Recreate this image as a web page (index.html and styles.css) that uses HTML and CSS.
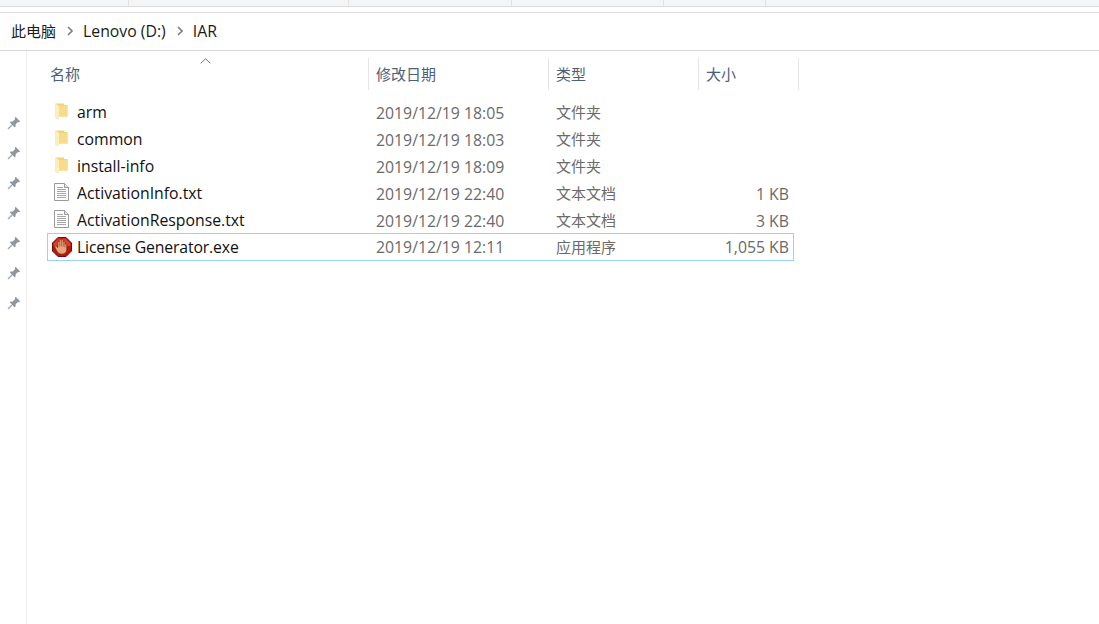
FILE: index.html
```html
<!DOCTYPE html>
<html lang="zh-CN">
<head>
  <meta charset="UTF-8" />
  <title>IAR</title>
  <link rel="stylesheet" href="styles.css">
</head>
<body>

  <svg class="defs" width="0" height="0">
    <defs>
      <symbol id="pin" viewBox="0 0 14 14">
        <path d="M8.6 0.8 13.2 5.4 11.8 6.2 11 5.9 8.6 8.3 8.6 10.6 7.5 11.2 2.9 6.6 3.6 5.5 5.8 5.5 8.2 3.1 7.8 2.2Z" fill="#8f979e"/>
        <path d="M5 8.9 1 13" stroke="#a4abb1" stroke-width="1.4" fill="none"/>
      </symbol>
      <symbol id="folder" viewBox="0 0 13 17">
        <path d="M0.5 0.5H9V2H12.5V13.5H4V16.5L0.5 15Z" fill="#f3d27a"/>
        <path d="M4 3H12.5V13.5H4Z" fill="#f8dc8c"/>
        <path d="M0.5 0.5 4 3V16.5L0.5 15Z" fill="#fbeebf"/>
      </symbol>
      <symbol id="textfile" viewBox="0 0 15 18">
        <path d="M0.5 0.5H10.5L14.5 4.5V17.5H0.5Z" fill="#fdfdfd" stroke="#9a9a9a"/>
        <path d="M10.5 0.5V4.5H14.5" fill="#e4e4e4" stroke="#9a9a9a"/>
        <path d="M3 4.5H9M3 6.5H12M3 8.5H12M3 10.5H12M3 12.5H12M3 14.5H12" stroke="#a8a8a8" fill="none"/>
      </symbol>
      <symbol id="stop" viewBox="0 0 20 20">
        <path d="M6 0.5H14L19.5 6V14L14 19.5H6L0.5 14V6Z" fill="#bd140c" stroke="#6e0d07"/>
        <path d="M6.5 1.6H13.5L18.4 6.5V9H1.6V6.5Z" fill="#dc3f32"/>
        <path d="M4 12.5 2.8 10C2.4 8.8 4 8.2 4.7 9.2L5.6 10.6V5C5.6 3.8 7.2 3.8 7.3 5V3.4C7.3 2.2 9.2 2.2 9.3 3.4V3.2C9.3 2 11.2 2 11.2 3.2V5C11.2 3.8 13 3.8 13 5V7.2C13 6.2 14.8 6.2 14.8 7.2V12C14.8 15.4 13 17.2 10 17.2C7.4 17.2 5.6 16 4 12.5Z" fill="#e9a67c" stroke="#7f3216" stroke-width="0.8"/>
        <path d="M7.3 5V9.6M9.3 3.4V9.4M11.2 5V9.6M13 7V10.4" stroke="#a04c26" stroke-width="0.8" fill="none"/>
      </symbol>
    </defs>
  </svg>

  <div class="ribbon">
    <span class="ribbon-tab tab-a"></span>
    <span class="ribbon-tab tab-b"></span>
    <span class="ribbon-tab tab-c"></span>
    <span class="ribbon-tab tab-d"></span>
    <span class="ribbon-tab tab-e"></span>
  </div>

  <nav class="breadcrumb">
    <span class="cjk">此电脑</span>
    <svg class="chevron" width="6" height="10" viewBox="0 0 6 10"><path d="M1 1 5 5 1 9" fill="none" stroke="#808080" stroke-width="1.7"/></svg>
    <span>Lenovo (D:)</span>
    <svg class="chevron" width="6" height="10" viewBox="0 0 6 10"><path d="M1 1 5 5 1 9" fill="none" stroke="#808080" stroke-width="1.7"/></svg>
    <span>IAR</span>
  </nav>

  <div class="explorer">
    <aside class="quick-access">
      <svg class="pin"><use href="#pin"/></svg>
      <svg class="pin"><use href="#pin"/></svg>
      <svg class="pin"><use href="#pin"/></svg>
      <svg class="pin"><use href="#pin"/></svg>
      <svg class="pin"><use href="#pin"/></svg>
      <svg class="pin"><use href="#pin"/></svg>
      <svg class="pin"><use href="#pin"/></svg>
    </aside>

    <main class="files">
      <div class="columns">
        <div class="col col-name">名称
          <svg class="sort-arrow" width="11" height="6" viewBox="0 0 11 6"><path d="M0.7 5.3 5.5 0.8 10.3 5.3" fill="none" stroke="#777" stroke-width="1"/></svg>
        </div>
        <div class="col col-date">修改日期</div>
        <div class="col col-type">类型</div>
        <div class="col col-size">大小</div>
      </div>

      <div class="row">
        <div class="cell-name"><svg class="ico-folder"><use href="#folder"/></svg>arm</div>
        <div class="cell-date">2019/12/19 18:05</div>
        <div class="cell-type">文件夹</div>
        <div class="cell-size"></div>
      </div>
      <div class="row">
        <div class="cell-name"><svg class="ico-folder"><use href="#folder"/></svg>common</div>
        <div class="cell-date">2019/12/19 18:03</div>
        <div class="cell-type">文件夹</div>
        <div class="cell-size"></div>
      </div>
      <div class="row">
        <div class="cell-name"><svg class="ico-folder"><use href="#folder"/></svg>install-info</div>
        <div class="cell-date">2019/12/19 18:09</div>
        <div class="cell-type">文件夹</div>
        <div class="cell-size"></div>
      </div>
      <div class="row">
        <div class="cell-name"><svg class="ico-file"><use href="#textfile"/></svg>ActivationInfo.txt</div>
        <div class="cell-date">2019/12/19 22:40</div>
        <div class="cell-type">文本文档</div>
        <div class="cell-size">1 KB</div>
      </div>
      <div class="row">
        <div class="cell-name"><svg class="ico-file"><use href="#textfile"/></svg>ActivationResponse.txt</div>
        <div class="cell-date">2019/12/19 22:40</div>
        <div class="cell-type">文本文档</div>
        <div class="cell-size">3 KB</div>
      </div>
      <div class="row selected">
        <div class="cell-name"><svg class="ico-exe"><use href="#stop"/></svg>License Generator.exe</div>
        <div class="cell-date">2019/12/19 12:11</div>
        <div class="cell-type">应用程序</div>
        <div class="cell-size">1,055 KB</div>
      </div>
    </main>
  </div>

</body>
</html>
```

FILE: styles.css
```css
* { box-sizing: border-box; }
html, body { height: 100%; }
body {
  margin: 0;
  background: #fff;
  color: #111;
  font-family: 'Open Sans', 'Noto Sans CJK SC', sans-serif;
  font-size: 15.8px;
  overflow: hidden;
  display: flex;
  flex-direction: column;
}
.defs { position: absolute; }
.cjk { font-size: 15px; }

.ribbon {
  height: 7px;
  background: #f4f5f7;
  border-bottom: 1px solid #dcdcdc;
  display: flex;
  flex: none;
}
.ribbon-tab { border-right: 1px solid #e3e3e3; height: 6px; }
.tab-a { width: 129px; }
.tab-b { width: 220px; }
.tab-c { width: 163px; }
.tab-d { width: 152px; }
.tab-e { width: 102px; }

.breadcrumb {
  flex: none;
  height: 39px;
  margin-top: 5px;
  padding: 0 0 2px 11px;
  border-top: 1px solid #e2e2e2;
  border-bottom: 1px solid #dadada;
  display: flex;
  align-items: center;
  color: #1a1a1a;
}
.chevron { margin: 0 10px 0 11px; }

.explorer { flex: 1; display: flex; }
.quick-access {
  flex: none;
  width: 27px;
  border-right: 1px solid #f0f0f0;
  padding: 65px 0 0 7px;
  display: flex;
  flex-direction: column;
  gap: 16px;
}
.pin { width: 14px; height: 14px; }

.files { flex: none; width: 772px; padding-top: 7px; }
.columns, .row { display: grid; }
.columns {
  grid-template-columns: 342px 180px 150px 100px;
  height: 32px;
  color: #4c607a;
  font-size: 15px;
  margin-bottom: 9px;
}
.col {
  position: relative;
  border-right: 1px solid #e5e5e5;
  padding-left: 7px;
  line-height: 32px;
}
.col-name { padding-left: 23px; }
.sort-arrow { position: absolute; left: 173px; top: 0; }

.row {
  grid-template-columns: 321px 180px 150px 95px;
  height: 27px;
  width: 747px;
  margin-left: 20px;
  align-items: center;
  color: #6a6a6a;
  border: 1px solid transparent;
}
.row > div { padding-left: 7px; }
.row .cell-name {
  color: #111;
  display: flex;
  align-items: center;
  gap: 8px;
  padding-bottom: 2px;
}
.row .cell-type { font-size: 15px; padding-bottom: 2px; }
.row .cell-size { text-align: right; padding-right: 5px; }
.row.selected { height: 28px; margin-top: -1px; border-color: #99d1ff; }
.row.selected .cell-name { padding-bottom: 0; letter-spacing: -0.15px; }

.ico-folder { width: 13px; height: 17px; margin-top: 0; margin-right: 1px; flex: none; }
.ico-file { width: 15px; height: 18px; margin-top: -1px; margin-left: -1px; flex: none; }
.ico-exe { width: 20px; height: 20px; margin-top: -1px; margin-left: -3px; margin-right: -3px; flex: none; }
```
